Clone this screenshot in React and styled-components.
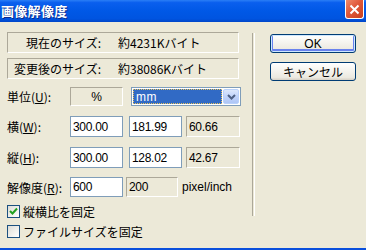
import styled, { createGlobalStyle } from "styled-components";

const GlobalStyle = createGlobalStyle`
  html, body {
    margin: 0;
    padding: 0;
    background: #ece9d8;
  }
`;

const jp = `"Noto Sans CJK JP", "Liberation Sans", sans-serif`;
const latin = `"Liberation Sans", "Noto Sans CJK JP", sans-serif`;

const Window = styled.div`
  width: 366px;
  height: 250px;
  box-sizing: border-box;
  display: flex;
  flex-direction: column;
  background: #ece9d8;
  border-bottom: 2px solid #0a4fdc;
  overflow: hidden;
`;

const TitleBar = styled.div`
  height: 22px;
  flex-shrink: 0;
  display: flex;
  align-items: flex-start;
  background: linear-gradient(
    to bottom,
    #2a7ef6 0%,
    #0a5fee 12%,
    #0058e6 50%,
    #0054e0 85%,
    #0046c8 100%
  );
`;

const Title = styled.div`
  font-family: ${jp};
  font-weight: bold;
  font-size: 13px;
  line-height: 21px;
  color: #fff;
  padding-left: 1px;
  letter-spacing: 0.3px;
  text-shadow: 1px 1px 0 #0a2a8c;
`;

const CloseButton = styled.div`
  margin-left: auto;
  margin-right: 2px;
  width: 19px;
  height: 19px;
  box-sizing: border-box;
  border: 1px solid #fff;
  border-top: none;
  border-radius: 0 0 3px 3px;
  background: linear-gradient(135deg, #f08a6c 0%, #e0583a 45%, #c8401e 100%);
  display: flex;
  align-items: center;
  justify-content: center;
`;

const Body = styled.div`
  flex: 1;
  display: flex;
`;

const LeftPanel = styled.div`
  width: 252px;
  box-sizing: border-box;
  padding: 10px 0 0 7px;
  display: flex;
  flex-direction: column;
`;

const Separator = styled.div`
  width: 1px;
  height: 183px;
  margin-top: 11px;
  border-left: 1px solid #aca899;
  border-right: 1px solid #fff;
`;

const RightPanel = styled.div`
  padding: 12px 0 0 15px;
  display: flex;
  flex-direction: column;
  gap: 9px;
`;

const InfoBox = styled.div`
  width: 232px;
  height: 21px;
  box-sizing: border-box;
  margin-top: ${(p) => p.$top || 0}px;
  display: flex;
  align-items: center;
  border: 1px solid;
  border-color: #aca899 #fff #fff #aca899;
  font-family: ${jp};
  font-size: 12px;
  color: #000;
`;

const InfoLabel = styled.span`
  width: 93px;
  text-align: right;
  white-space: nowrap;
`;

const InfoValue = styled.span`
  margin-left: 17px;
  white-space: nowrap;
`;

const Row = styled.div`
  display: flex;
  align-items: center;
  margin-top: ${(p) => p.$top}px;
  height: ${(p) => p.$h}px;
`;

const Label = styled.div`
  width: 63px;
  font-family: ${jp};
  font-size: 12px;
  color: #000;
  white-space: nowrap;
  u {
    text-decoration: underline;
  }
`;

const Field = styled.div`
  width: ${(p) => p.$w || 53}px;
  height: ${(p) => p.$h || 21}px;
  margin-left: ${(p) => p.$ml || 0}px;
  box-sizing: border-box;
  display: flex;
  align-items: center;
  justify-content: ${(p) => (p.$center ? "center" : "flex-start")};
  padding-left: ${(p) => (p.$center ? 0 : 2)}px;
  font-family: ${latin};
  font-size: 12px;
  letter-spacing: -0.3px;
  color: #000;
  background: ${(p) => (p.$readonly ? "#ece9d8" : "#fff")};
  border: 1px solid;
  border-color: ${(p) =>
    p.$readonly ? "#aca899 #fff #fff #aca899" : "#7f9db9"};
`;

const Select = styled.div`
  width: 110px;
  height: 19px;
  margin-left: 8px;
  box-sizing: border-box;
  border: 1px solid #7f9db9;
  background: #fff;
  display: flex;
  align-items: stretch;
  padding: 1px;
  gap: 1px;
`;

const Selected = styled.div`
  flex: 1;
  background: #316ac5;
  outline: 1px dotted #e8c25a;
  outline-offset: -1px;
  color: #fff;
  font-family: ${latin};
  font-size: 12px;
  letter-spacing: 0.5px;
  display: flex;
  align-items: center;
  padding-left: 3px;
`;

const DropButton = styled.div`
  width: 16px;
  box-sizing: border-box;
  border: 1px solid #b9d1fa;
  border-radius: 2px;
  background: linear-gradient(to bottom, #dce8fd 0%, #c1d4fb 50%, #aec6f6 100%);
  display: flex;
  align-items: center;
  justify-content: center;
`;

const UnitText = styled.span`
  margin-left: 4px;
  font-family: ${latin};
  font-size: 12px;
  color: #000;
`;

const CheckRow = styled.label`
  display: flex;
  align-items: center;
  margin-top: ${(p) => p.$top}px;
  height: 13px;
  font-family: ${jp};
  font-size: 12px;
  color: #000;
  white-space: nowrap;
`;

const CheckBox = styled.span`
  width: 13px;
  height: 13px;
  box-sizing: border-box;
  border: 1px solid #1c5180;
  background: linear-gradient(135deg, #dcdcd7 0%, #f2f2ee 60%, #fff 100%);
  display: flex;
  align-items: center;
  justify-content: center;
  margin-right: 3px;
`;

const Button = styled.div`
  width: 86px;
  height: 19px;
  box-sizing: border-box;
  border: 1px solid #003c74;
  border-radius: 3px;
  background: linear-gradient(to bottom, #fff 0%, #f6f5f0 40%, #ebe9e0 85%, #d6d0c5 100%);
  box-shadow: ${(p) =>
    p.$default
      ? "inset 0 0 0 1px #cee7ff, inset 0 -1px 0 2px #6982ee"
      : "none"};
  display: flex;
  align-items: center;
  justify-content: center;
  font-family: ${(p) => (p.$jp ? jp : latin)};
  font-size: 12px;
  color: #000;
`;

function Check({ checked, children, top }) {
  return (
    <CheckRow $top={top}>
      <CheckBox>
        {checked && (
          <svg width="9" height="9" viewBox="0 0 9 9">
            <path d="M1 4 L3.5 6.5 L8 1.5" stroke="#21a121" strokeWidth="2" fill="none" />
          </svg>
        )}
      </CheckBox>
      {children}
    </CheckRow>
  );
}

export default function App() {
  return (
    <>
      <GlobalStyle />
      <Window>
        <TitleBar>
          <Title>画像解像度</Title>
          <CloseButton>
            <svg width="11" height="11" viewBox="0 0 11 11">
              <path d="M1.5 1.5 L9.5 9.5 M9.5 1.5 L1.5 9.5" stroke="#fff" strokeWidth="2" />
            </svg>
          </CloseButton>
        </TitleBar>
        <Body>
          <LeftPanel>
            <InfoBox>
              <InfoLabel>現在のサイズ:</InfoLabel>
              <InfoValue>約4231Kバイト</InfoValue>
            </InfoBox>
            <InfoBox $top={5}>
              <InfoLabel>変更後のサイズ:</InfoLabel>
              <InfoValue>約38086Kバイト</InfoValue>
            </InfoBox>

            <Row $top={8} $h={19}>
              <Label>
                単位(<u>U</u>):
              </Label>
              <Field $readonly $center $h={19}>
                %
              </Field>
              <Select>
                <Selected>mm</Selected>
                <DropButton>
                  <svg width="9" height="6" viewBox="0 0 9 6">
                    <path d="M1 1 L4.5 4.5 L8 1" stroke="#4d6185" strokeWidth="2" fill="none" />
                  </svg>
                </DropButton>
              </Select>
            </Row>

            <Row $top={10} $h={21}>
              <Label>
                横(<u>W</u>):
              </Label>
              <Field>300.00</Field>
              <Field $ml={6}>181.99</Field>
              <Field $readonly $ml={4} $w={54}>
                60.66
              </Field>
            </Row>

            <Row $top={10} $h={21}>
              <Label>
                縦(<u>H</u>):
              </Label>
              <Field>300.00</Field>
              <Field $ml={6}>128.02</Field>
              <Field $readonly $ml={4} $w={54}>
                42.67
              </Field>
            </Row>

            <Row $top={9} $h={20}>
              <Label>
                解像度(<u>R</u>):
              </Label>
              <Field $h={20}>600</Field>
              <Field $readonly $ml={3} $w={52} $h={20}>
                200
              </Field>
              <UnitText>pixel/inch</UnitText>
            </Row>

            <Check checked top={8}>
              縦横比を固定
            </Check>
            <Check top={7}>ファイルサイズを固定</Check>
          </LeftPanel>
          <Separator />
          <RightPanel>
            <Button $default>OK</Button>
            <Button $jp>キャンセル</Button>
          </RightPanel>
        </Body>
      </Window>
    </>
  );
}
